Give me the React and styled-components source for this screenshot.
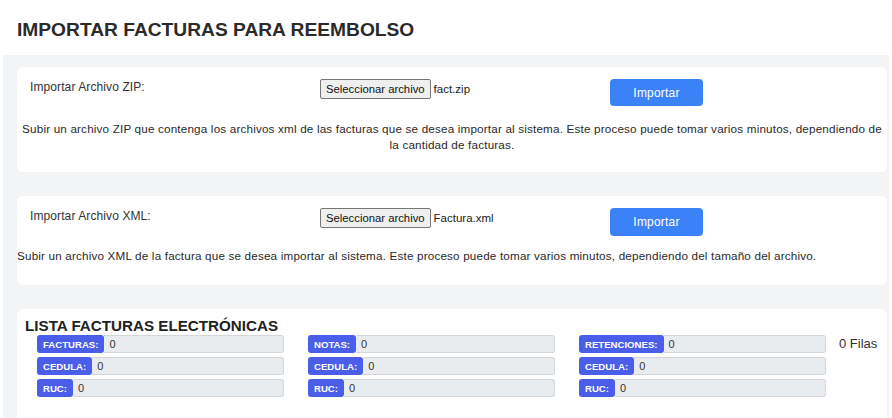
import React from "react";
import styled, { createGlobalStyle } from "styled-components";

const GlobalStyle = createGlobalStyle`
  html, body {
    margin: 0;
    padding: 0;
    background: #ffffff;
    font-family: "Liberation Sans", Arial, sans-serif;
    color: #222;
  }
`;

const Page = styled.div`
  margin: 3px;
  background: #f3f4f6;
  height: 415px;
  overflow: hidden;
`;

const Header = styled.div`
  background: #ffffff;
  height: 52px;
  display: flex;
  align-items: center;
  padding-left: 14px;
  padding-top: 2px;
  box-sizing: border-box;
`;

const Title = styled.h1`
  margin: 0;
  font-size: 19.2px;
  font-weight: 700;
  color: #2b2b2b;
`;

const Cards = styled.div`
  display: flex;
  flex-direction: column;
  gap: 24px;
  padding: 12px 2px 0 14px;
`;

const Card = styled.div`
  background: #ffffff;
  border-radius: 6px;
  padding-bottom: ${(p) => p.$bottom || 0}px;
`;

const UploadRow = styled.div`
  display: grid;
  grid-template-columns: 1fr 1fr 1fr;
`;

const Cell = styled.div`
  padding: 12px 13px;
  display: flex;
  align-items: flex-start;
  font-size: 12px;
  line-height: 16px;
  letter-spacing: 0.1px;
  color: #333;
`;

const FileButton = styled.span`
  display: inline-flex;
  align-items: center;
  height: 20px;
  box-sizing: border-box;
  padding: 0 5px;
  background: #efefef;
  border: 1px solid #767676;
  border-radius: 2px;
  font-size: 11.3px;
  letter-spacing: 0;
  color: #111;
  white-space: nowrap;
`;

const FileName = styled.span`
  margin-left: 3px;
  font-size: 11.5px;
  letter-spacing: 0;
  line-height: 20px;
  color: #222;
`;

const ImportButton = styled.button`
  width: 93px;
  height: ${(p) => p.$h || 27}px;
  border: none;
  border-radius: 4px;
  background: #3b82f6;
  color: #fff;
  font-family: "Liberation Sans", Arial, sans-serif;
  font-size: 12px;
  letter-spacing: 0.2px;
  cursor: pointer;
`;

const Description = styled.p`
  margin: ${(p) => p.$top || 0}px 0 0;
  padding: 0;
  text-align: ${(p) => (p.$center ? "center" : "left")};
  font-size: 11.7px;
  line-height: 16px;
  letter-spacing: 0.17px;
  color: #2a2a2a;
`;

const ListCard = styled.div`
  background: #ffffff;
  border-radius: 6px 6px 0 0;
  padding: 8px 8px 30px;
`;

const ListTitle = styled.h2`
  margin: 0;
  font-size: 15.2px;
  line-height: 18px;
  font-weight: 700;
  color: #222;
`;

const CounterGrid = styled.div`
  display: grid;
  grid-template-columns: 247px 247px 247px auto;
  column-gap: 24px;
  row-gap: 4px;
  padding-left: 12px;
`;

const Counter = styled.div`
  display: flex;
  height: 18px;
`;

const Badge = styled.span`
  display: flex;
  align-items: center;
  padding: 0 6px;
  background: #4a5ee9;
  color: #fff;
  font-size: 9.6px;
  font-weight: 700;
  border-radius: 3px;
  white-space: nowrap;
`;

const CounterValue = styled.span`
  flex: 1;
  display: flex;
  align-items: center;
  padding-left: 5px;
  background: #e9ecef;
  border: 1px solid #d4d6da;
  border-left: none;
  border-radius: 0 3px 3px 0;
  font-size: 11px;
  color: #333;
`;

const Rows = styled.span`
  font-size: 13px;
  line-height: 18px;
  color: #333;
  margin-left: -11px;
`;

const columns = [
  ["FACTURAS:", "CEDULA:", "RUC:"],
  ["NOTAS:", "CEDULA:", "RUC:"],
  ["RETENCIONES:", "CEDULA:", "RUC:"],
];

function Upload({ label, file, bottom, btnH, children }) {
  return (
    <Card $bottom={bottom}>
      <UploadRow>
        <Cell>{label}</Cell>
        <Cell>
          <FileButton>Seleccionar archivo</FileButton>
          <FileName>{file}</FileName>
        </Cell>
        <Cell>
          <ImportButton $h={btnH}>Importar</ImportButton>
        </Cell>
      </UploadRow>
      {children}
    </Card>
  );
}

export default function App() {
  const cells = [];
  for (let r = 0; r < 3; r++) {
    for (let c = 0; c < 3; c++) {
      cells.push(
        <Counter key={`${r}-${c}`}>
          <Badge>{columns[c][r]}</Badge>
          <CounterValue>0</CounterValue>
        </Counter>
      );
    }
    cells.push(r === 0 ? <Rows key="filas">0 Filas</Rows> : <span key={`e${r}`} />);
  }

  return (
    <>
      <GlobalStyle />
      <Page>
        <Header>
          <Title>IMPORTAR FACTURAS PARA REEMBOLSO</Title>
        </Header>
        <Cards>
          <Upload label="Importar Archivo ZIP:" file="fact.zip" bottom={19}>
            <Description $center $top={3}>
              Subir un archivo ZIP que contenga los archivos xml de las facturas que se desea
              importar al sistema. Este proceso puede tomar varios minutos, dependiendo de la
              cantidad de facturas.
            </Description>
          </Upload>
          <Upload label="Importar Archivo XML:" file="Factura.xml" bottom={21} btnH={28}>
            <Description>
              Subir un archivo XML de la factura que se desea importar al sistema. Este proceso
              puede tomar varios minutos, dependiendo del tamaño del archivo.
            </Description>
          </Upload>
          <ListCard>
            <ListTitle>LISTA FACTURAS ELECTRÓNICAS</ListTitle>
            <CounterGrid>{cells}</CounterGrid>
          </ListCard>
        </Cards>
      </Page>
    </>
  );
}
